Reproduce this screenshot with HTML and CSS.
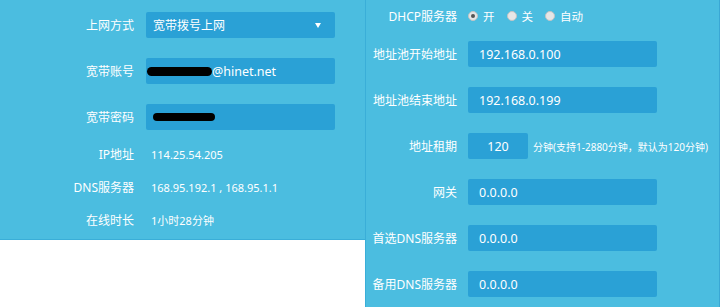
FILE: index.html
```html
<!DOCTYPE html>
<html lang="zh-CN">
<head>
    <meta charset="UTF-8">
    <meta name="viewport" content="width=device-width, initial-scale=1.0">
    <title>路由设置</title>
    <link rel="stylesheet" href="styles.css">
</head>
<body>

    <div class="page">
        <!-- WAN -->
        <div class="wan">
            <div class="fields">
                <div class="row">
                    <label class="lbl">上网方式</label>
                    <div class="box select">
                        <span>宽带拨号上网</span>
                        <i class="arrow"></i>
                    </div>
                </div>
                <div class="row">
                    <label class="lbl">宽带账号</label>
                    <div class="box mark-box"><span class="blot"></span><span>@hinet.net</span></div>
                </div>
                <div class="row">
                    <label class="lbl">宽带密码</label>
                    <div class="box pass-box"><span class="blot short"></span></div>
                </div>
            </div>
            <div class="status">
                <div class="srow"><span class="lbl">IP地址</span><span class="val">114.25.54.205</span></div>
                <div class="srow"><span class="lbl">DNS服务器</span><span class="val">168.95.192.1 , 168.95.1.1</span></div>
                <div class="srow"><span class="lbl">在线时长</span><span class="val">1小时28分钟</span></div>
            </div>
        </div>

        <!-- LAN / DHCP -->
        <div class="lan">
            <div class="row dhcp">
                <label class="lbl">DHCP服务器</label>
                <div class="radios">
                    <span class="radio on"></span><span class="rtext">开</span>
                    <span class="radio"></span><span class="rtext">关</span>
                    <span class="radio"></span><span class="rtext">自动</span>
                </div>
            </div>
            <div class="row">
                <label class="lbl">地址池开始地址</label>
                <div class="box ip">192.168.0.100</div>
            </div>
            <div class="row">
                <label class="lbl">地址池结束地址</label>
                <div class="box ip">192.168.0.199</div>
            </div>
            <div class="row">
                <label class="lbl">地址租期</label>
                <div class="box ip lease">120</div>
                <span class="hint">分钟(支持1-2880分钟，默认为120分钟)</span>
            </div>
            <div class="row">
                <label class="lbl">网关</label>
                <div class="box ip">0.0.0.0</div>
            </div>
            <div class="row">
                <label class="lbl">首选DNS服务器</label>
                <div class="box ip">0.0.0.0</div>
            </div>
            <div class="row">
                <label class="lbl">备用DNS服务器</label>
                <div class="box ip">0.0.0.0</div>
            </div>
        </div>
    </div>

</body>
</html>
```

FILE: styles.css
```css
body{
    margin:0;
    background:#fff;
    font-family:"Noto Sans","Noto Sans CJK SC",sans-serif;
    font-size:12px;
    color:#fff;
}

.page{
    display:flex;
    align-items:flex-start;
    width:720px;
    height:307px;
}

/* left panel */
.wan{
    width:365px;
    height:227px;
    padding-top:12px;
    background:#4bbde0;
    border-bottom:1px solid #3aaed8;
}

.fields{
    display:flex;
    flex-direction:column;
    gap:20px;
}

.row{
    display:flex;
    align-items:center;
    height:26px;
}

.lbl{
    flex:none;
    text-align:right;
    white-space:nowrap;
}

.wan .lbl{
    width:134px;
    margin-right:12px;
}

.box{
    box-sizing:border-box;
    height:26px;
    width:189px;
    background:#2aa1d6;
    border-radius:2px;
    display:flex;
    align-items:center;
    padding-left:7px;
}

.select{
    justify-content:space-between;
    padding-right:14px;
}

.arrow{
    width:0;
    height:0;
    border-left:3.5px solid transparent;
    border-right:3.5px solid transparent;
    border-top:5px solid #fff;
}

.mark-box{
    padding-left:1px;
    font-size:12.5px;
}

.pass-box{
    padding-left:7px;
}

.blot{
    display:inline-block;
    width:65px;
    height:9px;
    background:#000;
    border-radius:5px;
}

.blot.short{
    width:62px;
    height:8px;
}

.status{
    margin-top:14px;
    display:flex;
    flex-direction:column;
    gap:13px;
}

.srow{
    display:flex;
    align-items:center;
    height:20px;
}

.srow .lbl{
    margin-right:17px;
}

.val{
    font-size:11px;
}

/* right panel */
.lan{
    box-sizing:border-box;
    width:355px;
    height:307px;
    padding-top:3px;
    background:#4bbde0;
    border-left:1px solid #3aaed8;
    border-right:1px solid #3aa7d4;
    box-shadow:1px 0 0 #a9e3f4;
    display:flex;
    flex-direction:column;
    gap:20px;
}

.lan .lbl{
    width:91px;
    margin-right:11px;
}

.lan .dhcp{
    margin-bottom:-8px;
}

.radios{
    display:flex;
    align-items:center;
    font-size:11.5px;
}

.radio{
    box-sizing:border-box;
    width:10px;
    height:10px;
    border-radius:50%;
    background:#e6e6e6;
    border:1px solid #c4c4c4;
    display:flex;
    align-items:center;
    justify-content:center;
    margin-right:5px;
}

.radio.on::after{
    content:"";
    width:4px;
    height:4px;
    border-radius:50%;
    background:#555;
}

.rtext{
    margin-right:12px;
}

.ip{
    padding-left:11px;
    font-size:12.5px;
}

.lease{
    width:60px;
    padding-left:0;
    justify-content:center;
    margin-right:5px;
}

.hint{
    font-size:10px;
    white-space:nowrap;
}
```
